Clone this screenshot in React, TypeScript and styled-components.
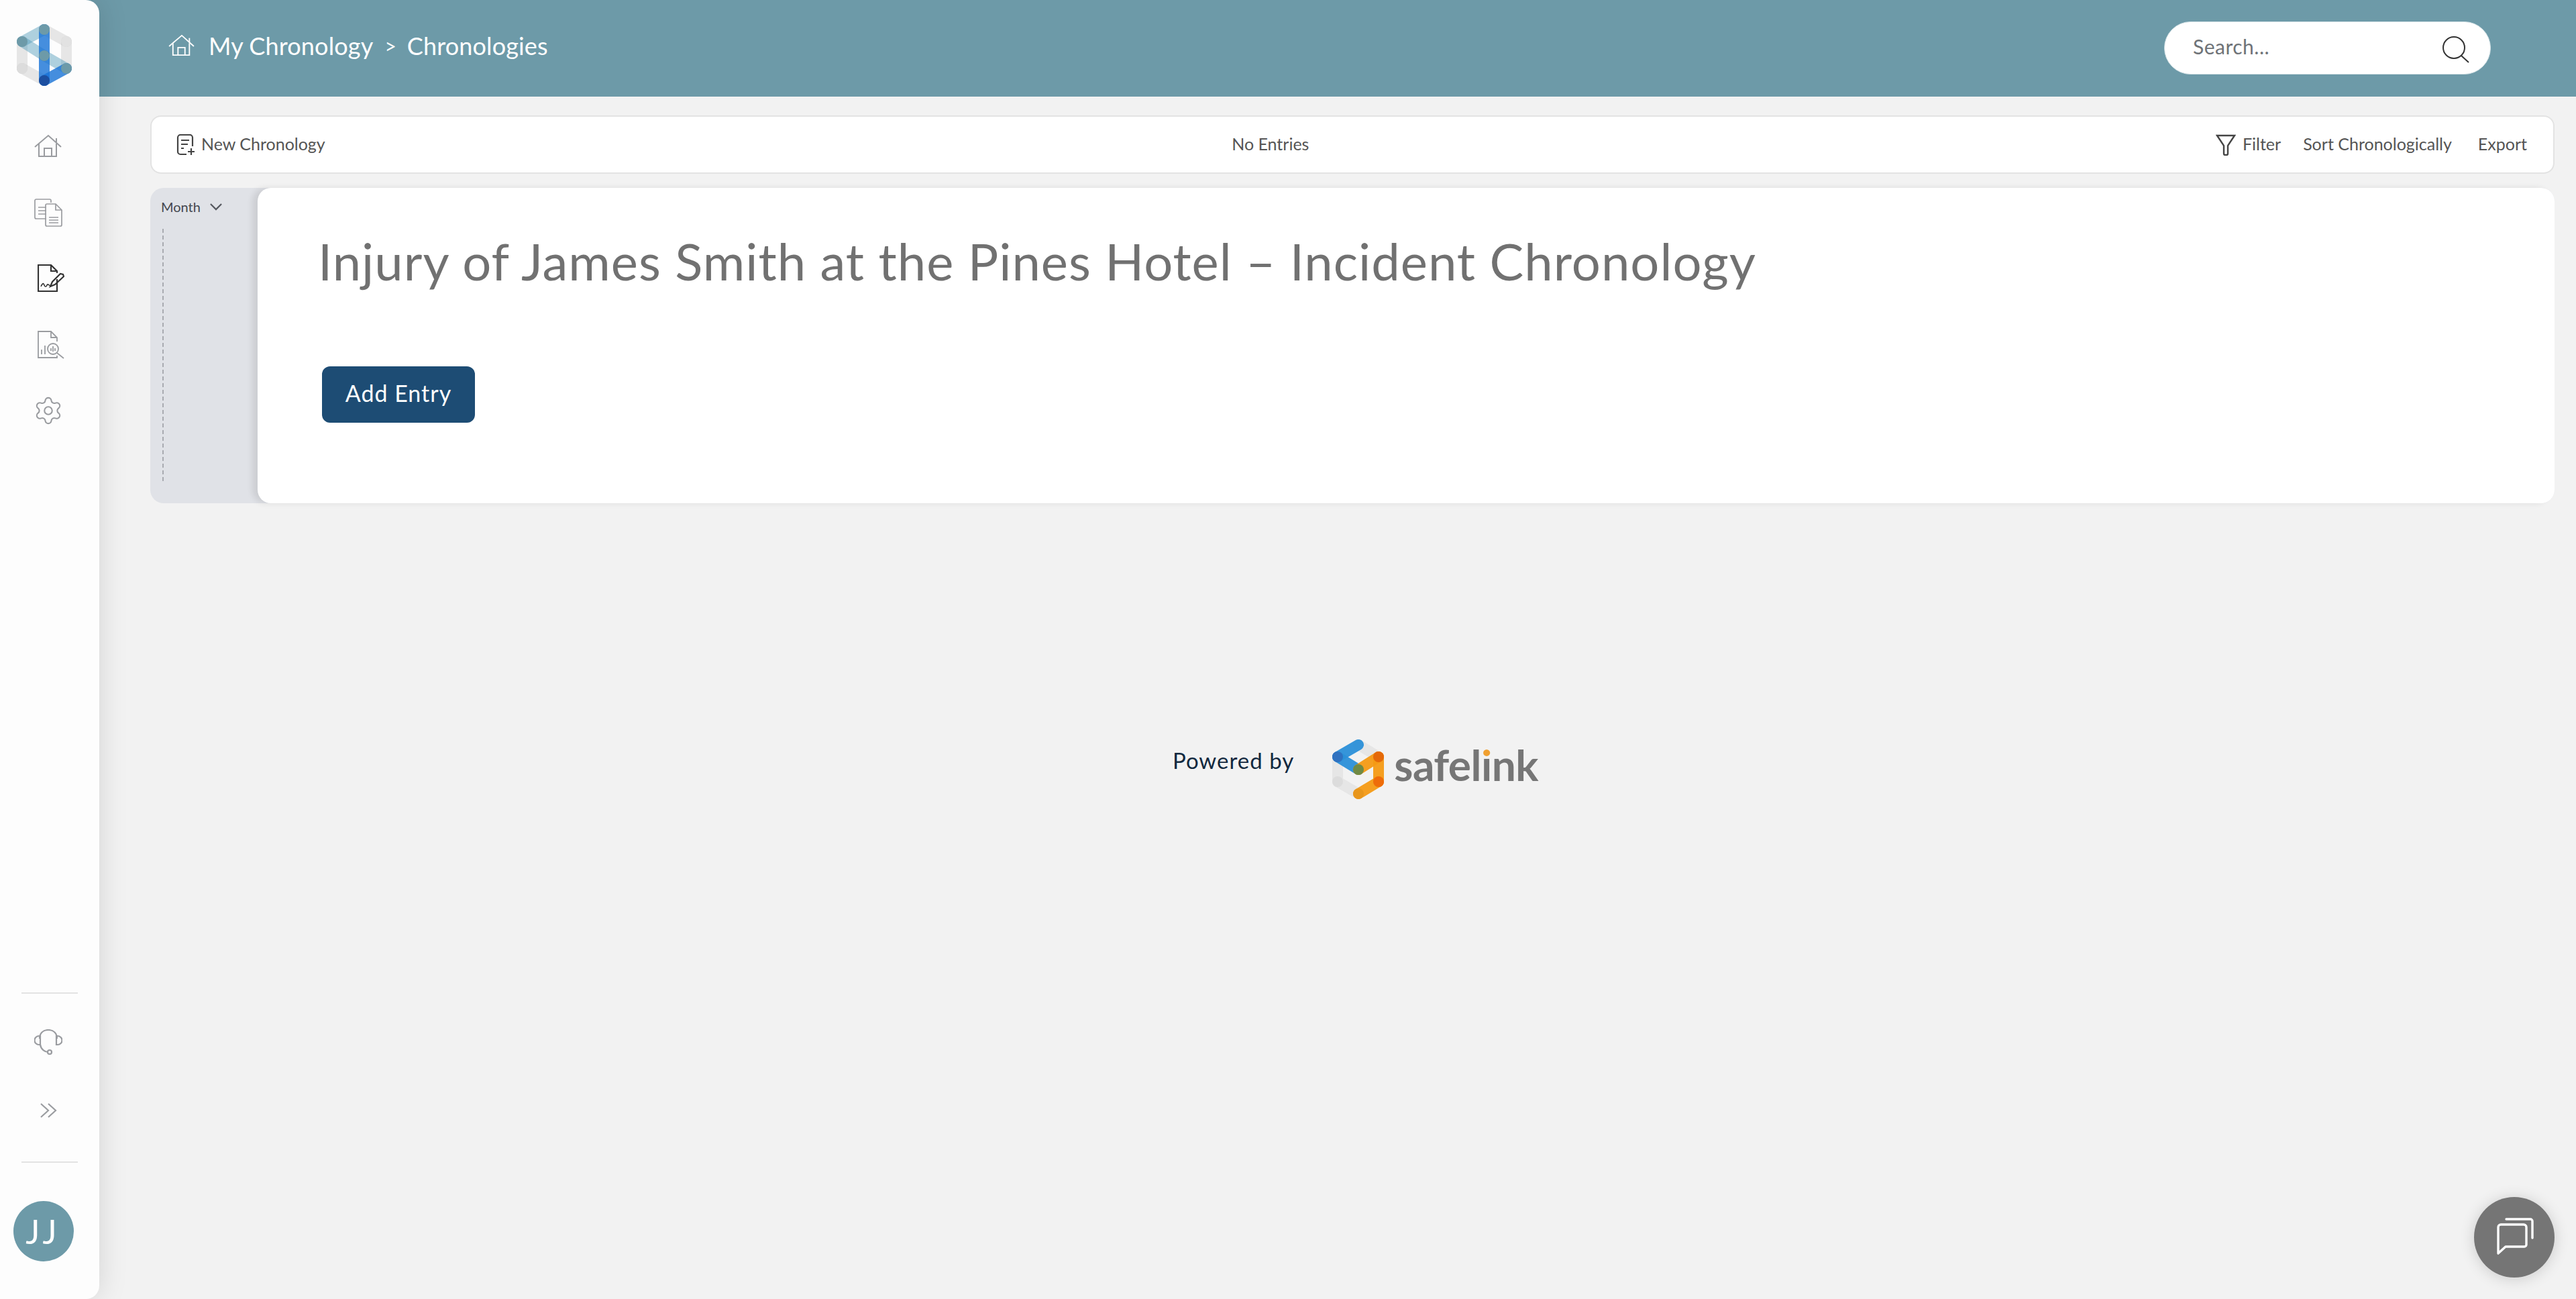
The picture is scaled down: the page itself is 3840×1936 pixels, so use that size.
import React from "react";
import styled, { createGlobalStyle } from "styled-components";
import { Settings } from "lucide-react";

const Global = createGlobalStyle`
  html, body { margin: 0; padding: 0; height: 100%; background: #f2f2f2; }
  body { font-family: "Lato", "Noto Sans", sans-serif; overflow: hidden; }
  #root { height: 100%; }
`;

const Shell = styled.div`display: flex; width: 3840px; height: 1936px; overflow: hidden;`;

const Sidebar = styled.aside`
  position: relative; z-index: 2; flex: 0 0 148px; width: 148px; height: 100%;
  display: flex; flex-direction: column; background: #fdfdfd;
  border-radius: 0 20px 20px 0; box-shadow: 0 0 44px rgba(0,0,0,.13);
`;
const LogoSvg = styled.svg`display: block; width: 82px; height: 92px; margin: 36px 0 41px 25px;`;
const Nav = styled.nav`display: flex; flex-direction: column;`;
const NavItem = styled.a<{ $active?: boolean }>`
  display: flex; align-items: center; justify-content: center; height: 98.5px; width: 144px;
  color: ${p => (p.$active ? "#333" : "#9a9ca0")};
  svg { display: block; }
`;
const SideBottom = styled.div`margin-top: auto; display: flex; flex-direction: column;`;
const Rule = styled.hr`border: 0; height: 2px; width: 84px; margin: 0 0 0 32px; background: #e3e3e3;`;
const ToolStack = styled.div`display: flex; flex-direction: column; padding: 21px 0 25px;`;
const ToolItem = styled.a`display: flex; align-items: center; justify-content: center; height: 102px; width: 144px; color: #9a9ca0;`;
const Avatar = styled.div`
  width: 90px; height: 90px; margin: 57px 0 56px 20px; border-radius: 50%; background: #6d9aa8; color: #fff;
  display: flex; align-items: center; justify-content: center; font-size: 50px; letter-spacing: 5px; padding-right: 2px; box-sizing: border-box;
`;

const Main = styled.main`flex: 1; min-width: 0; margin-left: -20px; display: flex; flex-direction: column;`;
const Header = styled.header`
  height: 144px; flex: 0 0 144px; background: #6d9aa8; display: flex; align-items: center; justify-content: space-between;
  padding: 0 127px 0 123px; box-sizing: border-box; color: #fff;
`;
const Crumbs = styled.div`display: flex; align-items: center; font-size: 36px; color: #fff; margin-top: -8px;`;
const CrumbIcon = styled.svg`width: 40px; height: 34px; margin-right: 20px; color: #fff;`;
const CrumbSep = styled.span`margin: 0 16px 0 17px; font-size: 30px;`;
const Crumb = styled.span`letter-spacing: .15px;`;
const Search = styled.div`
  width: 487px; height: 79px; margin-top: -2px; box-sizing: border-box; border-radius: 40px; background: #fff;
  display: flex; align-items: center; justify-content: space-between; padding: 0 31px 0 42px;
  border: 1px solid #d4e2e6;
`;
const SearchText = styled.span`font-size: 30px; color: #6e7377; letter-spacing: .5px; margin-top: -4px;`;
const SearchIcon = styled.svg`width: 40px; height: 40px; margin-top: 6px; color: #333;`;

const Content = styled.div`flex: 1; padding: 28px 32px 0 96px; display: flex; flex-direction: column; min-height: 0;`;
const Toolbar = styled.div`
  height: 87px; box-sizing: border-box; background: #fff; border: 2px solid #e3e3e3; border-radius: 16px;
  display: flex; align-items: center; justify-content: space-between; padding: 0 39px 0 37px;
  font-size: 25px; color: #555;
`;
const ToolGroup = styled.div`display: flex; align-items: center;`;
const ToolLabel = styled.span<{ $gap?: number }>`margin: -3px 0 0 ${p => p.$gap ?? 0}px;`;
const Timeline = styled.section`
  margin-top: 21px; height: 470px; display: flex; background: #e0e2e7; border-radius: 20px;
`;
const Rail = styled.div`flex: 0 0 160px; box-sizing: border-box; padding: 15px 0 0 16px; display: flex; flex-direction: column;`;
const RailHead = styled.div`display: flex; align-items: center; font-size: 20px; line-height: 26px; color: #44474f;`;
const RailChevron = styled.svg`width: 18px; height: 11px; margin-left: 14px; color: #55585f;`;
const RailLine = styled.div`margin: 20px 0 0 2px; height: 376px; width: 0; border-left: 2px dashed #a9abb1;`;
const Card = styled.div`
  flex: 1; background: #fff; border-radius: 20px; box-shadow: -8px 0 10px rgba(0,0,0,.09);
  padding: 0 0 0 96px; display: flex; flex-direction: column; align-items: flex-start;
`;
const Title = styled.h1`
  margin: 59px 0 0 -6px; font-size: 76px; line-height: 100px; font-weight: 400; color: #717171; letter-spacing: 1px; white-space: nowrap;
`;
const AddButton = styled.button`
  margin-top: 107px; width: 228px; height: 84px; border: 0; border-radius: 12px; background: #1d4c74; color: #fff;
  font: 400 34px "Lato", sans-serif; letter-spacing: 1px; padding: 0 0 6px;
`;
const Powered = styled.div`margin-top: 350px; display: flex; align-items: center; justify-content: center; padding-left: 9px;`;
const PoweredText = styled.span`font-size: 33px; color: #12293f; letter-spacing: 1px; margin-top: -26px;`;
const SafeSvg = styled.svg`width: 82px; height: 92px; margin-left: 55px;`;
const SafeText = styled.span`font-size: 64px; font-weight: 700; color: #767676; margin: -12px 0 0 12px; letter-spacing: -.5px; line-height: 1;`;
const SafeI = styled.span`
  background: linear-gradient(#f0a030 0 36%, #767676 36%); -webkit-background-clip: text; background-clip: text; color: transparent;
`;
const ChatBtn = styled.button`
  position: fixed; left: 3688px; top: 1784px; width: 120px; height: 120px; padding: 0; border: 0; border-radius: 50%;
  background: #757575; box-shadow: 0 2px 22px rgba(0,0,0,.16);
  svg { display: block; }
`;

const HomeGlyph = () => (
  <>
    <path d="M1 19 21 2 40 19" />
    <path d="M33 6v7" />
    <path d="M7 14v19h26V14" />
    <path d="M15 33V21h11v12" />
  </>
);

const App = () => (
  <>
    <Global />
    <Shell>
      <Sidebar>
        <LogoSvg viewBox="25 36 82 92" fill="none" strokeWidth="16" strokeLinecap="round">
          <g stroke="#8a8a8a" strokeOpacity=".2">
            <path d="M66 44 99 62" /><path d="M99 62v40" /><path d="M33 62v40" /><path d="M33 102l33 18" />
          </g>
          <circle cx="33" cy="102" r="8" fill="#dcdcdc" />
          <circle cx="99" cy="62" r="8" fill="#e2e2e2" />
          <g stroke="#4d9ab8" strokeOpacity=".45">
            <path d="M66 44 33 62" /><path d="M33 62 66 83" /><path d="M66 83 99 102" />
          </g>
          <g stroke="#1672d6" strokeOpacity=".8">
            <path d="M66 44V83" /><path d="M66 83v37" /><path d="M66 120 99 102" />
          </g>
          <g fill="#6d9aa8" stroke="none">
            <circle cx="66" cy="44" r="8" /><circle cx="33" cy="62" r="8" /><circle cx="66" cy="83" r="8" /><circle cx="99" cy="102" r="8" />
          </g>
          <circle cx="66" cy="120" r="8" fill="#1c4fa0" stroke="none" />
        </LogoSvg>
        <Nav>
          <NavItem>
            <svg width="42" height="36" viewBox="0 0 42 36" fill="none" stroke="currentColor" strokeWidth="2"><HomeGlyph /></svg>
          </NavItem>
          <NavItem>
            <svg width="42" height="42" viewBox="0 0 42 42" fill="none" stroke="currentColor" strokeWidth="1.7">
              <path d="M18 30H3a2 2 0 0 1-2-2V3a2 2 0 0 1 2-2h20a2 2 0 0 1 2 2v3" />
              <path d="M6 13h12M6 18h12M6 23h12" />
              <path d="M19 8h13l9 9v22a2 2 0 0 1-2 2H19a2 2 0 0 1-2-2V10a2 2 0 0 1 2-2z" />
              <path d="M32 8v9h9M22 28h14M22 32h14M22 36h14" />
            </svg>
          </NavItem>
          <NavItem $active>
            <svg width="40" height="42" viewBox="0 0 40 42" fill="none" stroke="currentColor" strokeWidth="2.2" style={{ marginLeft: 8 }}>
              <path d="M29 22v18H1V1h19l9 9v3M20 1v9h9" />
              <path d="M5 33c3-6 4-5 5-2s3 3 4 0 3 1 6 1" strokeWidth="1.6" />
              <path d="M19 33l3-7 12-12 4 1 1 3-13 12z" />
            </svg>
          </NavItem>
          <NavItem>
            <svg width="40" height="42" viewBox="0 0 40 42" fill="none" stroke="currentColor" strokeWidth="1.8" style={{ marginLeft: 8 }}>
              <path d="M29 16v-6l-9-9H1v39h28v-3M20 1v9h9" />
              <path d="M6 35v-7M11 35V22" />
              <circle cx="23" cy="27" r="8" />
              <path d="M29 33l10 8M20 30v-4M23 31v-8M26 30v-4" />
            </svg>
          </NavItem>
          <NavItem>
            <Settings size={46} strokeWidth={1.1} />
          </NavItem>
        </Nav>
        <SideBottom>
          <Rule />
          <ToolStack>
            <ToolItem>
              <svg width="42" height="38" viewBox="0 0 42 38" fill="none" stroke="currentColor" strokeWidth="2.2">
                <path d="M8 14C8 6 13 1 21 1s13 5 13 13" />
                <path d="M9 10H7a6 6 0 0 0 0 13h2zM33 10h2a6 6 0 0 1 0 13h-2z" />
                <path d="M9 23c1 7 7 11 12 11" />
                <circle cx="23" cy="34" r="3" />
              </svg>
            </ToolItem>
            <ToolItem>
              <svg width="26" height="22" viewBox="0 0 26 22" fill="none" stroke="currentColor" strokeWidth="2.2">
                <path d="M2 1l11 10L2 21M13 1l11 10-11 10" />
              </svg>
            </ToolItem>
          </ToolStack>
          <Rule />
          <Avatar>JJ</Avatar>
        </SideBottom>
      </Sidebar>
      <Main>
        <Header>
          <Crumbs>
            <CrumbIcon viewBox="0 0 42 36" fill="none" stroke="currentColor" strokeWidth="2"><HomeGlyph /></CrumbIcon>
            <Crumb>My Chronology</Crumb>
            <CrumbSep>&gt;</CrumbSep>
            <Crumb>Chronologies</Crumb>
          </Crumbs>
          <Search>
            <SearchText>Search...</SearchText>
            <SearchIcon viewBox="0 0 40 40" fill="none" stroke="currentColor" strokeWidth="2">
              <circle cx="17" cy="17" r="16" />
              <path d="M28 29l11 10" />
            </SearchIcon>
          </Search>
        </Header>
        <Content>
          <Toolbar>
            <ToolGroup>
              <svg width="28" height="32" viewBox="0 0 28 32" fill="none" stroke="#444" strokeWidth="2.2">
                <path d="M15 30H6a4 4 0 0 1-4-4V5a4 4 0 0 1 4-4h14a4 4 0 0 1 4 4v13" />
                <path d="M7 9h12M7 15h10M7 21h4M17 26h10M22 21v10" />
              </svg>
              <ToolLabel $gap={9}>New Chronology</ToolLabel>
            </ToolGroup>
            <ToolLabel>No Entries</ToolLabel>
            <ToolGroup>
              <svg width="30" height="32" viewBox="0 0 30 32" fill="none" stroke="#444" strokeWidth="2.4">
                <path d="M2 2h26L18 17v12a2 2 0 0 1-2 2h-2a2 2 0 0 1-2-2V17z" />
              </svg>
              <ToolLabel $gap={10}>Filter</ToolLabel>
              <ToolLabel $gap={33}>Sort Chronologically</ToolLabel>
              <ToolLabel $gap={39}>Export</ToolLabel>
            </ToolGroup>
          </Toolbar>
          <Timeline>
            <Rail>
              <RailHead>
                Month
                <RailChevron viewBox="0 0 20 12" fill="none" stroke="currentColor" strokeWidth="2.4"><path d="M1 1l9 9 9-9" /></RailChevron>
              </RailHead>
              <RailLine />
            </Rail>
            <Card>
              <Title>Injury of James Smith at the Pines Hotel – Incident Chronology</Title>
              <AddButton>Add Entry</AddButton>
            </Card>
          </Timeline>
          <Powered>
            <PoweredText>Powered by</PoweredText>
            <SafeSvg viewBox="1986 1100 82 92" fill="none" strokeWidth="16" strokeLinecap="round">
              <g stroke="#9a9a9a" strokeOpacity=".13">
                <path d="M2027 1110l30 18M1996 1128v37M1996 1165l31 18" />
              </g>
              <circle cx="1996" cy="1165" r="8" fill="#dcdcdc" />
              <g stroke="#2a8fd8" strokeOpacity=".95">
                <path d="M2027 1110l-31 18" /><path d="M1996 1128l31 19" />
              </g>
              <g stroke="#f49a14" strokeOpacity=".95">
                <path d="M2027 1147l30-19" /><path d="M2057 1128v37" /><path d="M2057 1165l-30 18" />
              </g>
              <g stroke="none">
                <circle cx="1996" cy="1128" r="8" fill="#2f72c0" />
                <circle cx="2027" cy="1147" r="8" fill="#6f8a45" />
                <circle cx="2057" cy="1128" r="8" fill="#e4690a" />
                <circle cx="2057" cy="1165" r="8" fill="#ee6c0a" />
                <circle cx="2027" cy="1183" r="8" fill="#e8961c" />
              </g>
            </SafeSvg>
            <SafeText>safel<SafeI>i</SafeI>nk</SafeText>
          </Powered>
        </Content>
      </Main>
      <ChatBtn aria-label="Chat">
        <svg width="120" height="120" viewBox="0 0 120 120" fill="none" stroke="#fff" strokeWidth="3.4" strokeLinecap="round" strokeLinejoin="round">
          <path d="M36 45a4 4 0 0 1 4-4h34a4 4 0 0 1 4 4v26a3 3 0 0 1-3 3H47L36 84z" />
          <path d="M48 33h36a3 3 0 0 1 3 3v25" />
        </svg>
      </ChatBtn>
    </Shell>
  </>
);

export default App;
